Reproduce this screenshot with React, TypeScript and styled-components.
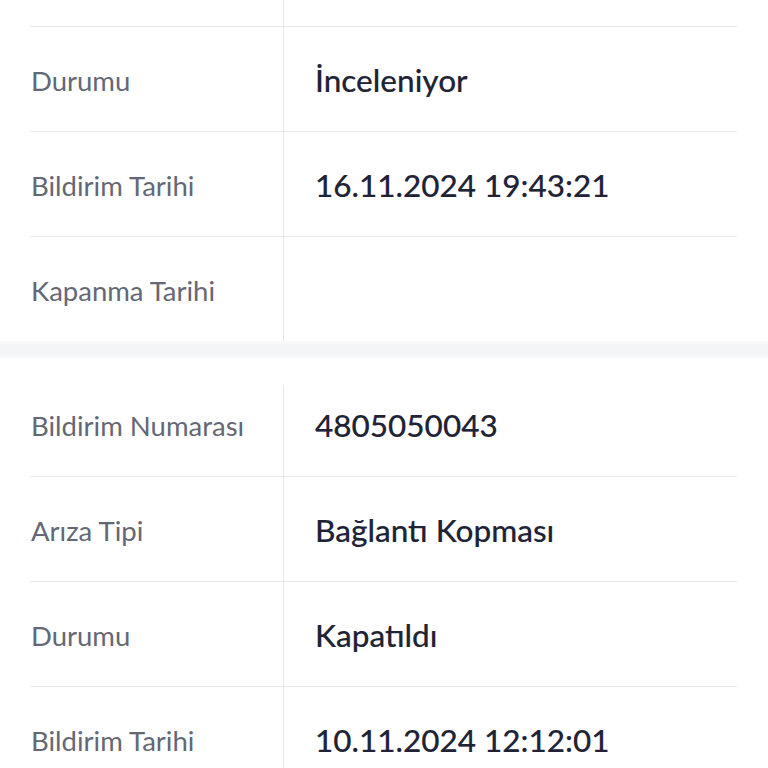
import React from "react";
import styled, { createGlobalStyle } from "styled-components";

const Global = createGlobalStyle`
  html, body { margin: 0; padding: 0; background: #ffffff; }
  body { font-family: Lato, "Noto Sans", sans-serif; overflow: hidden; }
`;

const Page = styled.div`
  width: 768px;
  display: flex;
  flex-direction: column;
`;

const Card = styled.section<{ $padTop?: number }>`
  background: #ffffff;
  padding: ${(p) => p.$padTop ?? 0}px 31px 0 30px;
  display: flex;
  flex-direction: column;
`;

const Band = styled.div`
  height: 17px;
  background: linear-gradient(
    to bottom,
    #fbfbfc 0%,
    #f4f5f7 25%,
    #f4f5f7 70%,
    #fafbfc 100%
  );
`;

const Row = styled.div<{ $last?: boolean; $h?: number }>`
  display: grid;
  grid-template-columns: 253px 1fr;
  height: ${(p) => p.$h ?? 105}px;
  box-sizing: border-box;
  border-bottom: ${(p) => (p.$last ? "none" : "1px solid #e7e8eb")};
`;

const Label = styled.div`
  display: flex;
  align-items: center;
  padding-left: 1px;
  padding-top: 2px;
  font-size: 27.5px;
  color: #646874;
`;

const Value = styled.div<{ $inset?: number }>`
  display: flex;
  align-items: center;
  padding-left: 32px;
  padding-top: 1px;
  font-size: 31.5px;
  font-weight: 500;
  color: #1f2336;
  -webkit-text-stroke: 0.12px #1f2336;
  background: linear-gradient(#e7e8eb, #e7e8eb) no-repeat;
  background-size: 1px calc(100% - ${(p) => p.$inset ?? 0}px);
  background-position: 0 ${(p) => p.$inset ?? 0}px;
`;

type Item = { label: string; value: string };

const card1: Item[] = [
  { label: "", value: "" },
  { label: "Durumu", value: "İnceleniyor" },
  { label: "Bildirim Tarihi", value: "16.11.2024 19:43:21" },
  { label: "Kapanma Tarihi", value: "" },
];

const card2: Item[] = [
  { label: "Bildirim Numarası", value: "4805050043" },
  { label: "Arıza Tipi", value: "Bağlantı Kopması" },
  { label: "Durumu", value: "Kapatıldı" },
  { label: "Bildirim Tarihi", value: "10.11.2024 12:12:01" },
];

export default function App() {
  return (
    <>
      <Global />
      <Page>
        <Card>
          {card1.map((it, i) => (
            <Row
              key={i}
              $last={i === card1.length - 1}
              $h={i === 0 ? 27 : i === card1.length - 1 ? 104 : 105}
            >
              <Label>{it.label}</Label>
              <Value>{it.value}</Value>
            </Row>
          ))}
        </Card>
        <Band />
        <Card $padTop={14}>
          {card2.map((it, i) => (
            <Row key={i}>
              <Label>{it.label}</Label>
              <Value $inset={i === 0 ? 13 : 0}>{it.value}</Value>
            </Row>
          ))}
        </Card>
      </Page>
    </>
  );
}
